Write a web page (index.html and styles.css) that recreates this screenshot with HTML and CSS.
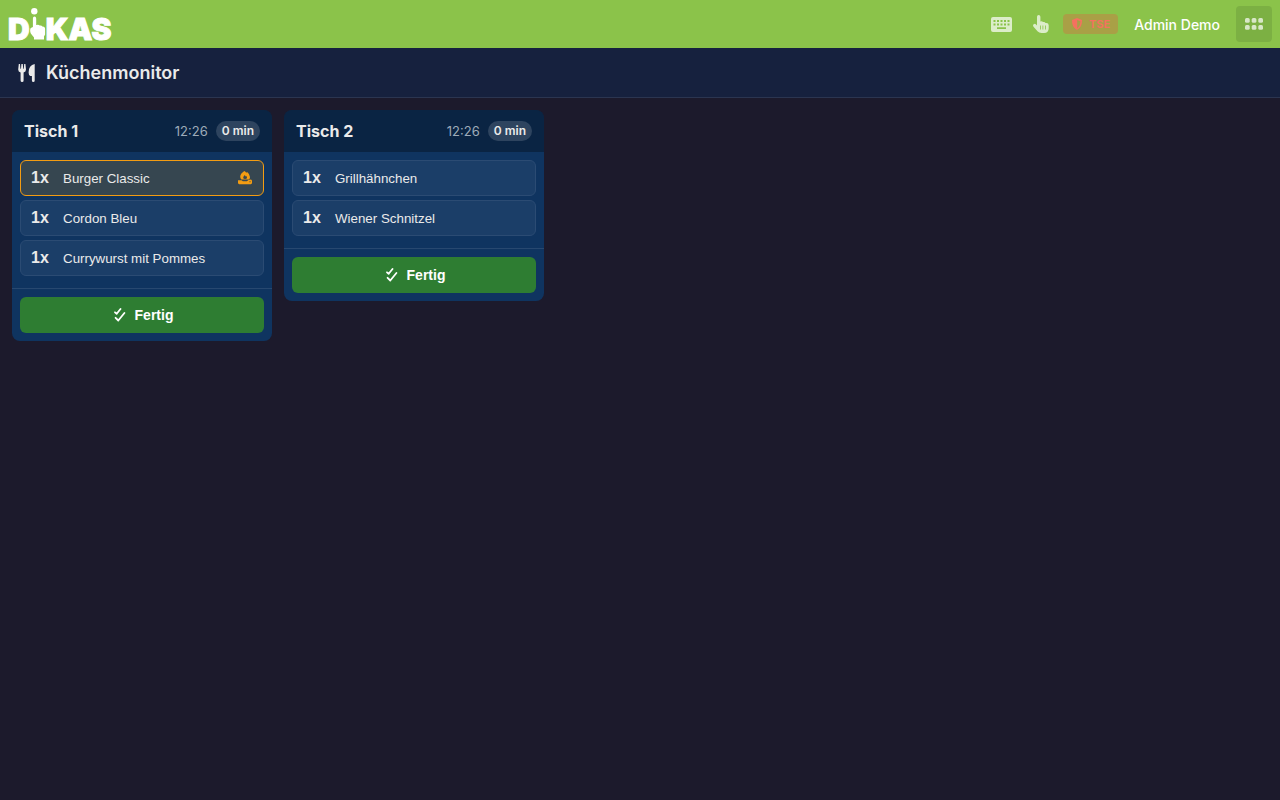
FILE: index.html
```html
<!DOCTYPE html>
<html lang="de">

<head>
    <meta charset="UTF-8">
    <meta name="viewport" content="width=device-width, initial-scale=1.0">
    <title>Küchenmonitor</title>
    <link rel="stylesheet" href="styles.css">
</head>

<body>
    <!-- shared icons -->
    <svg class="icon-defs" aria-hidden="true">
        <symbol id="icon-done" viewBox="-3 0 16 14">
            <path d="M1 4.300l1.700 1.500L6.500 1M1.600 9.800l2.700 2.700L10.400 5" fill="none" stroke="currentColor" stroke-width="1.800" stroke-linecap="round" stroke-linejoin="round" />
        </symbol>
    </svg>

    <header class="navbar">
        <a class="logo" href="#" aria-label="DiKAS">
            <span>D</span>
            <svg class="logo-hand" viewBox="0 0 16 32" width="16" height="32">
                <circle cx="4.300" cy="3.300" r="3.200" />
                <path d="M2.900 10.500Q2.900 8.500 4.500 8.500t1.700 2V17q2.600-.9 3.500.6 1.900-.6 2.600.8 2.800-.2 2.800 2.600v5.500L14 28.500V31.500H4v-2L.8 25.500Q-.5 22 .8 20l2.100-1z" />
            </svg>
            <span>KAS</span>
        </a>
        <div class="nav-right">
            <button class="nav-icon" aria-label="Tastatur">
                <svg viewBox="0 0 21 15" width="21" height="15">
                    <path fill="currentColor" fill-rule="evenodd" d="M2 0h17a2 2 0 0 1 2 2v11a2 2 0 0 1-2 2H2a2 2 0 0 1-2-2V2a2 2 0 0 1 2-2zM2.500 3v2h2V3zm3.500 0v2h2V3zm3.500 0v2h2V3zm3.500 0v2h2V3zm3.500 0v2h2V3zM2.500 6.500v2h2v-2zm3.500 0v2h2v-2zm3.500 0v2h2v-2zm3.500 0v2h2v-2zm3.500 0v2h2v-2zM6 10.300v1.700h9v-1.700z" />
                </svg>
            </button>
            <button class="nav-icon" aria-label="Touch">
                <svg viewBox="0 0 16 18" width="16" height="18">
                    <path fill="currentColor" fill-rule="evenodd" d="M4 1.800a1.700 1.700 0 0 1 3.400 0V6.500q1.700-.8 2.600.6 1.800-.7 2.500.9 3.200-.4 3.200 2.300v3q0 4.700-4.700 4.700H8.500q-2.500 0-4-1.700L.5 11.800q-1-1.400.2-2.500 1.200-.9 2.300.1l1 1zM7 10.500v4h.8v-4zm2.500 0v4h.8v-4zm2.500 0v4h.8v-4z" />
                </svg>
            </button>
            <span class="tse-badge">
                <svg viewBox="0 0 12 12" width="12" height="12">
                    <path fill="currentColor" fill-rule="evenodd" d="M6 0l5 2q.4 7-5 10Q.6 9 1 2zM6.200 1.900v8.300q3.200-2.400 3.200-7z" />
                </svg>
                TSE
            </span>
            <span class="user-name">Admin Demo</span>
            <button class="menu-btn" aria-label="Menü">
                <svg viewBox="0 0 18 12" width="18" height="12" fill="currentColor">
                    <rect width="4.700" height="4.700" rx="1.500" />
                    <rect x="6.700" width="4.700" height="4.700" rx="1.500" />
                    <rect x="13.300" width="4.700" height="4.700" rx="1.500" />
                    <rect y="7" width="4.700" height="4.700" rx="1.500" />
                    <rect x="6.700" y="7" width="4.700" height="4.700" rx="1.500" />
                    <rect x="13.300" y="7" width="4.700" height="4.700" rx="1.500" />
                </svg>
            </button>
        </div>
    </header>

    <div class="page-title">
        <svg viewBox="0 0 18 18" width="18" height="18">
            <path fill="currentColor" d="M.8 0h1.200l.4 4.800h.6L3.400 0h1.400l.4 4.800h.6L6.200 0h1.200l.6 5.500Q8 7.800 5.600 8.500v8q0 1.500-1.500 1.500t-1.500-1.500v-8Q.2 7.800.2 5.500zM16.700 0v16.500Q16.700 18 15.300 18t-1.400-1.500V12h-1.600q-1.700-.4-1.700-3.500 0-7.500 6.100-8.500z" />
        </svg>
        <h1>Küchenmonitor</h1>
    </div>

    <main class="orders">
        <section class="order-card">
            <div class="order-header">
                <h2>Tisch 1</h2>
                <span class="order-time">12:26</span>
                <span class="order-wait">0 min</span>
            </div>
            <div class="order-items">
                <button class="item cooking">
                    <span class="qty">1x</span>
                    <span class="item-name">Burger Classic</span>
                    <svg viewBox="0 0 14 14" width="14" height="14">
                        <path fill="currentColor" fill-rule="evenodd" d="M6.300 0q1.300.6 2 1.700l.8-.7Q12 3.200 12 6q0 1.600-1 2.600H3.400Q2.200 7.600 2.200 5.800q0-3 4.100-5.800zM6.800 4Q5.200 5.500 5.200 6.500q0 1.600 1.900 1.600T9 6.500q0-.8-.8-1.600l-.5.500zM0 9.200h3.500l1.400 1.100h4l1.600-1.300 2.300-.5Q14 8.800 14 10v1.800q0 1.200-1.200 1.400H1.200Q0 13 0 11.800zM11.500 10.200v1h1v-1z" />
                    </svg>
                </button>
                <button class="item">
                    <span class="qty">1x</span>
                    <span class="item-name">Cordon Bleu</span>
                </button>
                <button class="item">
                    <span class="qty">1x</span>
                    <span class="item-name">Currywurst mit Pommes</span>
                </button>
            </div>
            <div class="order-footer">
                <button class="done-btn"><svg width="16" height="14"><use href="#icon-done" /></svg>Fertig</button>
            </div>
        </section>

        <section class="order-card">
            <div class="order-header">
                <h2>Tisch 2</h2>
                <span class="order-time">12:26</span>
                <span class="order-wait">0 min</span>
            </div>
            <div class="order-items">
                <button class="item">
                    <span class="qty">1x</span>
                    <span class="item-name">Grillhähnchen</span>
                </button>
                <button class="item">
                    <span class="qty">1x</span>
                    <span class="item-name">Wiener Schnitzel</span>
                </button>
            </div>
            <div class="order-footer">
                <button class="done-btn"><svg width="16" height="14"><use href="#icon-done" /></svg>Fertig</button>
            </div>
        </section>
    </main>
</body>

</html>
```

FILE: styles.css
```css
* {
    box-sizing: border-box;
}

body {
    margin: 0;
    min-height: 100vh;
    background-color: #1c1a2c;
    color: #eaeaea;
    font-family: Inter, sans-serif;
    font-size: 14px;
}

h1,
h2 {
    margin: 0;
}

button {
    border: none;
    cursor: pointer;
}

.icon-defs {
    display: none;
}

/* Top bar */
.navbar {
    display: flex;
    justify-content: space-between;
    align-items: center;
    height: 48px;
    padding: 0 8px;
    background-color: #8bc34a;
    color: white;
}

.logo {
    display: flex;
    align-items: flex-end;
    height: 32px;
    color: white;
    font-size: 30px;
    font-weight: 900;
    line-height: 21px;
    text-decoration: none;
    -webkit-text-stroke: 1px white;
}

.logo-hand {
    fill: white;
}

.nav-right {
    display: flex;
    align-items: center;
}

.nav-icon {
    display: flex;
    align-items: center;
    justify-content: center;
    width: 40px;
    height: 40px;
    padding: 0;
    background: none;
    color: rgba(255, 255, 255, 0.7);
}

.tse-badge {
    display: flex;
    align-items: center;
    gap: 6px;
    height: 20px;
    margin: 0 16px 0 2px;
    padding: 0 8px;
    border-radius: 4px;
    background-color: #a9a046;
    color: #f5715f;
    font-size: 11px;
    font-weight: 600;
}

.user-name {
    margin-right: 16px;
    font-weight: 500;
}

.menu-btn {
    display: flex;
    align-items: center;
    justify-content: center;
    width: 36px;
    height: 36px;
    padding: 0;
    border-radius: 4px;
    background-color: #7cb043;
    color: rgba(255, 255, 255, 0.7);
}

/* Page title */
.page-title {
    display: flex;
    align-items: center;
    gap: 10px;
    height: 50px;
    padding: 0 18px;
    background-color: #16213e;
    border-bottom: 1px solid #2b3550;
}

.page-title h1 {
    font-size: 18px;
    font-weight: 600;
    line-height: 22px;
}

/* Orders */
.orders {
    display: grid;
    grid-template-columns: repeat(auto-fill, 260px);
    align-items: start;
    gap: 12px;
    padding: 12px;
}

.order-card {
    overflow: hidden;
    border-radius: 8px;
    background-color: #0f3460;
}

.order-header {
    display: flex;
    align-items: center;
    gap: 8px;
    height: 42px;
    padding: 0 12px;
    background-color: rgba(0, 0, 0, 0.3);
}

.order-header h2 {
    flex: 1;
    font-size: 16px;
    font-weight: 700;
}

.order-time {
    color: #9dabb9;
    font-size: 13px;
    line-height: 18px;
}

.order-wait {
    padding: 2px 6px;
    border-radius: 12px;
    background-color: rgba(255, 255, 255, 0.15);
    font-size: 12px;
    font-weight: 600;
    line-height: 16px;
}

.order-items {
    display: flex;
    flex-direction: column;
    gap: 4px;
    padding: 8px 8px 12px;
}

.item {
    display: flex;
    align-items: center;
    height: 36px;
    padding: 0 11px 0 10px;
    border: 1px solid #2b4b73;
    border-radius: 6px;
    background-color: #1b3e68;
    color: #eaeaea;
    font-family: "Liberation Sans", Arial, sans-serif;
    text-align: left;
}

.item.cooking {
    border-color: #f39c12;
    background-color: #364650;
}

.item.cooking svg {
    color: #f39c12;
}

.qty {
    width: 32px;
    font-size: 16px;
    font-weight: 700;
}

.item-name {
    flex: 1;
}

.order-footer {
    padding: 8px;
    border-top: 1px solid #274870;
}

.done-btn {
    display: flex;
    align-items: center;
    justify-content: center;
    gap: 8px;
    width: 100%;
    height: 36px;
    border-radius: 6px;
    background-color: #2e7d32;
    color: white;
    font-family: "Liberation Sans", Arial, sans-serif;
    font-size: 14px;
    font-weight: 700;
}
```
